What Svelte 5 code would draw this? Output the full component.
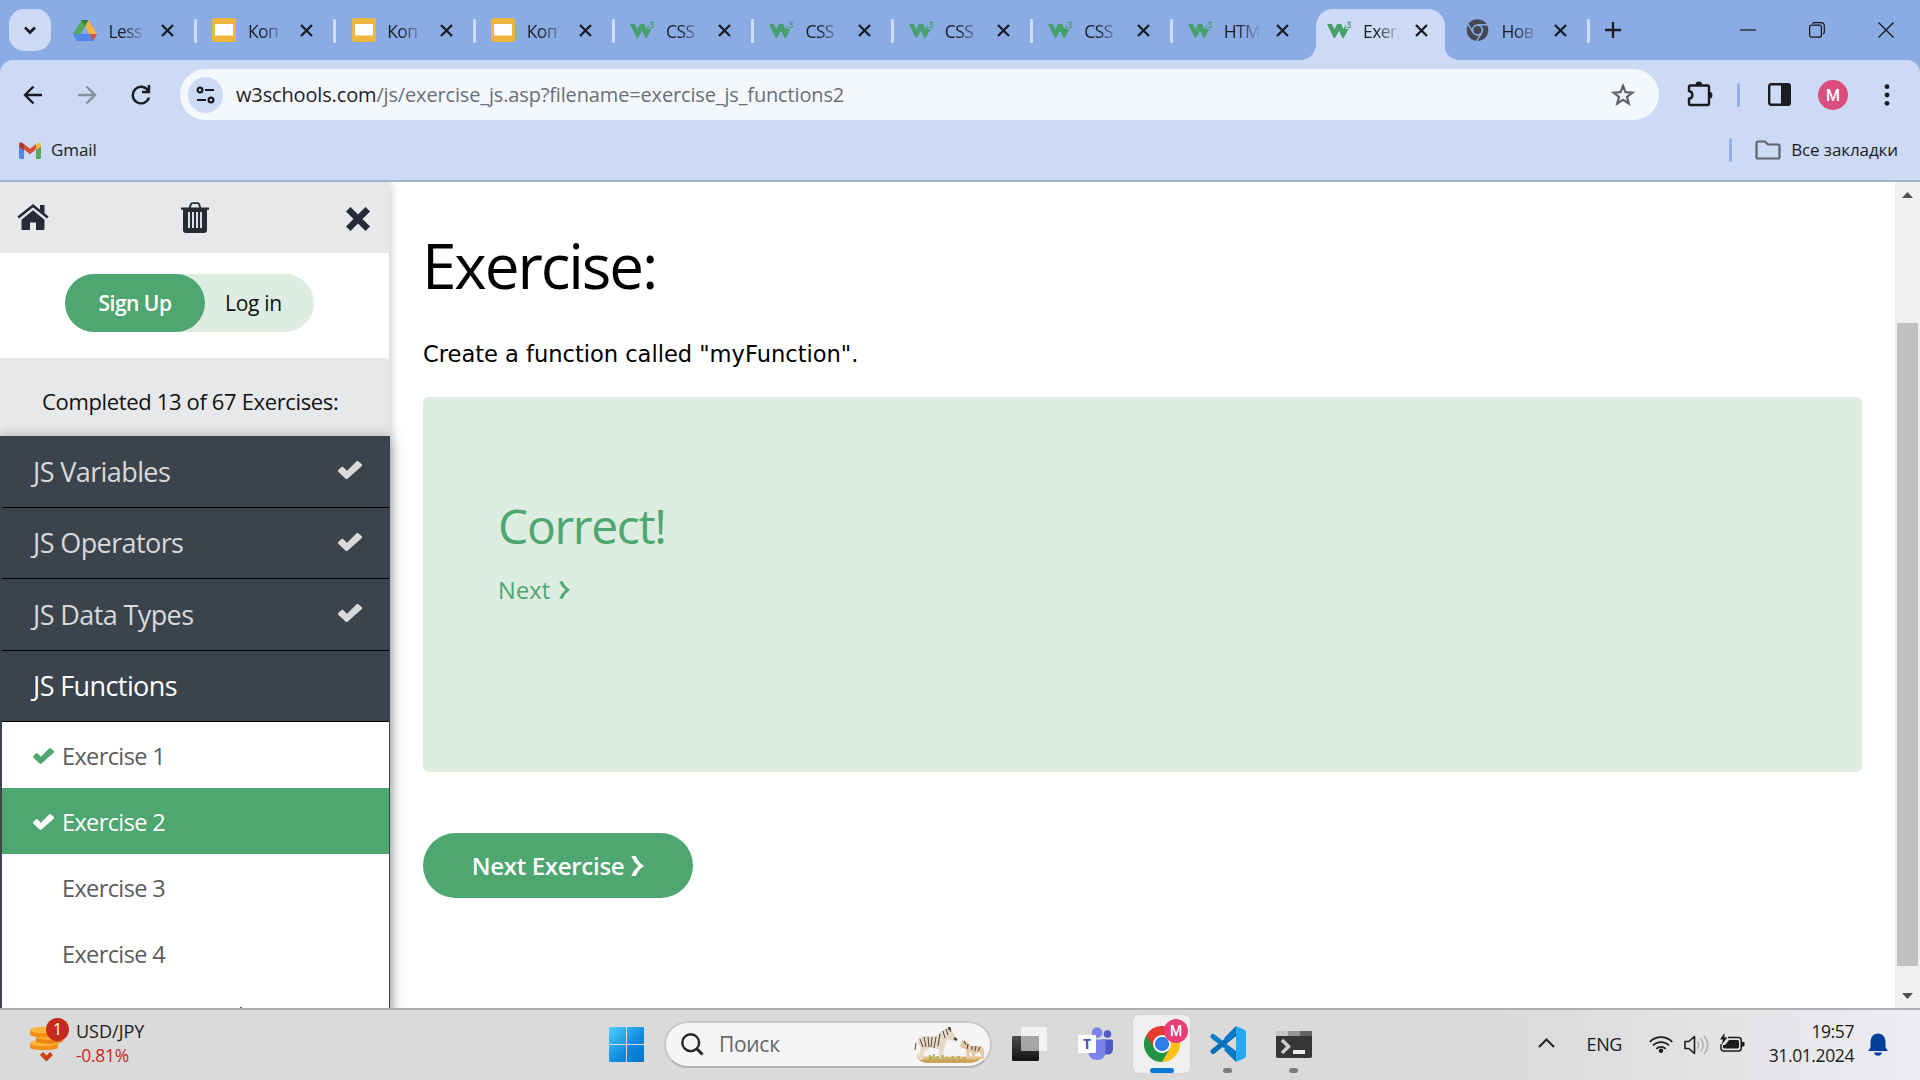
<script>
  const tabs = [
    { icon: 'drive', title: 'Less' },
    { icon: 'slides', title: 'Коп' },
    { icon: 'slides', title: 'Коп' },
    { icon: 'slides', title: 'Коп' },
    { icon: 'w3', title: 'CSS' },
    { icon: 'w3', title: 'CSS' },
    { icon: 'w3', title: 'CSS' },
    { icon: 'w3', title: 'CSS' },
    { icon: 'w3', title: 'HTM' },
    { icon: 'w3', title: 'Exer', active: true },
    { icon: 'chrome', title: 'Нов' }
  ];
  const topics = [
    { name: 'JS Variables', done: true },
    { name: 'JS Operators', done: true },
    { name: 'JS Data Types', done: true },
    { name: 'JS Functions', done: false }
  ];
  const exercises = [
    { name: 'Exercise 1', done: true },
    { name: 'Exercise 2', done: true, current: true },
    { name: 'Exercise 3' },
    { name: 'Exercise 4' }
  ];
</script>

{#snippet check()}
  <svg class="check" viewBox="0 0 24 18"><path d="M20.6.4a1.6 1.6 0 0 0-2.2 0L9 9.8 5.4 6.200a1.600 1.600 0 0 0-2.200 0L.5 8.700a1.600 1.600 0 0 0 0 2.200l7 6.700a1.600 1.600 0 0 0 2.300 0L23.600 5.200a1.600 1.600 0 0 0 0-2.200z" fill="currentColor" /></svg>
{/snippet}

<div class="screen">
  <header class="tabstrip">
    <button class="tab-search" aria-label="Search tabs">
      <svg width="14" height="9" viewBox="0 0 14 9"><path d="M2 1.500l5 5 5-5" fill="none" stroke="#1a1c22" stroke-width="2.700" /></svg>
    </button>
    <div class="tabs">
      {#each tabs as tab}
        <div class="tab" class:active={tab.active}>
          <span class="favicon">
            {#if tab.icon === 'drive'}
              <svg width="24" height="21" viewBox="0 0 24 21">
                <path d="M8.500 0h7L4 21 0 14z" fill="#58a55c" />
                <path d="M8.500 0h7L12 6.500z" fill="#2e7d46" />
                <path d="M15.500 0L24 14h-7.500L12 6.500z" fill="#f1b43f" />
                <path d="M0 14h24l-4 7H4z" fill="#5186ec" />
                <path d="M16.500 14H24l-4 7z" fill="#d95140" />
              </svg>
            {:else if tab.icon === 'slides'}
              <svg width="24" height="24" viewBox="0 0 24 24"><rect width="24" height="24" rx="3" fill="#eab63e" /><rect x="3" y="6" width="18" height="11.500" fill="#fff" /></svg>
            {:else if tab.icon === 'w3'}
              <svg width="25" height="18" viewBox="0 0 25 18">
                <path d="M0 3h4.800l2.700 5.500L10 3h4.300l2.200 5.500L18.500 3v5h3L16.800 17h-1.300L12 9.800 8 17H6.800z" fill="#46a06c" />
                <path d="M20 1.200h3.400l-1.700 2.200c2.400.2 2.200 3.400.2 3.400-1 0-1.600-.3-2-.9" fill="none" stroke="#46a06c" stroke-width="1.100" />
              </svg>
            {:else}
              <svg width="23" height="22" viewBox="0 0 23 22">
                <circle cx="11.500" cy="11" r="10.800" fill="#43474f" />
                <circle cx="11.500" cy="11" r="4.900" fill="#43474f" stroke="#8babe5" stroke-width="1.700" />
                <path d="M11.500 5.800h10M7.200 13.500L2.200 5.500M15.800 13.500l-5 8.200" stroke="#8babe5" stroke-width="1.500" />
              </svg>
            {/if}
          </span>
          <span class="title">{tab.title}</span>
          <svg class="close" width="13" height="13" viewBox="0 0 13 13"><path d="M1 1l11 11M12 1L1 12" stroke="#1a1c22" stroke-width="2.300" /></svg>
        </div>
      {/each}
    </div>
    <svg class="plus" width="16" height="16" viewBox="0 0 16 16"><path d="M8 0v16M0 8h16" stroke="#1a1c22" stroke-width="2.300" /></svg>
    <div class="window-buttons">
      <svg width="16" height="16" viewBox="0 0 16 16"><path d="M0 8h16" stroke="#111" stroke-width="1.200" /></svg>
      <svg width="16" height="16" viewBox="0 0 16 16"><rect x=".6" y="3.200" width="11.800" height="12" rx="2" fill="none" stroke="#111" stroke-width="1.200" /><path d="M3.500 1.500q.8-.9 2-.9h6.500q3.300 0 3.300 3.300v6q0 1.500-1.200 2.200" fill="none" stroke="#111" stroke-width="1.200" /></svg>
      <svg width="16" height="16" viewBox="0 0 16 16"><path d="M.5.500l15 15M15.500.500l-15 15" stroke="#111" stroke-width="1.200" /></svg>
    </div>
  </header>

  <div class="chrome">
    <nav class="toolbar">
      <svg class="back" width="20" height="20" viewBox="0 0 20 20"><path d="M19 10H2.500M10.500 1.500L2 10l8.500 8.500" fill="none" stroke="#1a1c22" stroke-width="2.400" /></svg>
      <svg class="forward" width="20" height="20" viewBox="0 0 20 20"><path d="M1 10h16.500M9.500 1.500L18 10l-8.500 8.500" fill="none" stroke="#868e9f" stroke-width="2.400" /></svg>
      <svg class="reload" width="20" height="20" viewBox="0 0 20 20"><path d="M17 5.500A8.300 8.300 0 1 0 18 12.500" fill="none" stroke="#1a1c22" stroke-width="2.400" /><path d="M19.200 0v8.200H11V5.800h5.800V0z" fill="#1a1c22" /></svg>
      <div class="omnibox">
        <span class="site-info">
          <svg width="19" height="18" viewBox="0 0 19 18"><g fill="none" stroke="#1a1c22" stroke-width="2.200"><circle cx="4" cy="4" r="2.400" /><path d="M9 4h9M1 14h9" /><circle cx="15" cy="14" r="2.400" /></g></svg>
        </span>
        <span class="url"><b>w3schools.com</b>/js/exercise_js.asp?filename=exercise_js_functions2</span>
        <svg class="star" width="24" height="24" viewBox="0 0 24 24"><path d="M12 3l2.500 6.200 6.700.5-5.200 4.200 1.700 6.600-5.700-3.600-5.700 3.600L8 13.900 2.800 9.700l6.700-.5z" fill="none" stroke="#5f646d" stroke-width="2.300" /></svg>
      </div>
      <svg class="extensions" width="26" height="26" viewBox="0 0 26 26"><path d="M3.500 4.500h17q1.500 0 1.500 1.500v16.500q0 1.500-1.500 1.500h-17q-1.500 0-1.500-1.500V17.800c4.500-.8 4.500-7 0-7.800V6q0-1.500 1.500-1.500z" fill="none" stroke="#1a1c22" stroke-width="2.400" /><path d="M8.600 4a3.300 3.400 0 0 1 6.600 0zM22 10.800a3.400 3.400 0 0 1 0 6.800z" fill="#1a1c22" /></svg>
      <i class="rule"></i>
      <svg class="side-panel" width="23" height="23" viewBox="0 0 23 23"><rect x="1.200" y="1.200" width="20.600" height="20.600" rx="2" fill="none" stroke="#1a1c22" stroke-width="2.400" /><path d="M13 1h9v21h-9z" fill="#1a1c22" /></svg>
      <span class="avatar">M</span>
      <svg class="kebab" width="6" height="22" viewBox="0 0 6 22"><g fill="#1a1c22"><circle cx="3" cy="2.700" r="2.400" /><circle cx="3" cy="11" r="2.400" /><circle cx="3" cy="19.300" r="2.400" /></g></svg>
    </nav>
    <div class="bookmarks">
      <svg class="gmail" width="22" height="17" viewBox="0 0 22 17"><path d="M0 3l5 3.500V17H1.500Q0 17 0 15.500z" fill="#5186ec" /><path d="M22 3l-5 3.500V17h3.500q1.500 0 1.500-1.500z" fill="#58a55c" /><path d="M5 2l6 4.700L17 2v5.500l-6 4.800-6-4.800z" fill="#d95140" /><path d="M17 2q5-4 5 1v1.500l-5 3.700z" fill="#f1bd42" /><path d="M5 2Q0-2 0 3v1.500l5 3.700z" fill="#b3362b" /></svg>
      <span>Gmail</span>
      <i class="rule"></i>
      <svg class="folder" width="26" height="20" viewBox="0 0 26 20"><path d="M3 1.500h7l3 3h10q1.500 0 1.500 1.500v11q0 1.500-1.500 1.500H3Q1.500 18.500 1.500 17V3Q1.500 1.500 3 1.500z" fill="none" stroke="#5f646d" stroke-width="2.200" /></svg>
      <span class="all">Все закладки</span>
    </div>
  </div>

  <div class="page">
    <aside class="sidebar">
      <div class="side-tools">
        <svg width="32" height="27" viewBox="0 0 32 27"><path d="M16 6.200L4.500 15.800V25q0 1 1 1H13v-7.500h6V26h7.500q1 0 1-1v-9.200z" fill="#272b37" /><path d="M1.200 13.500L16 1.700l14.800 11.800" fill="none" stroke="#272b37" stroke-width="2.600" /><path d="M23 1h4.500v9.500L23 7z" fill="#272b37" /></svg>
        <svg width="28" height="31" viewBox="0 0 28 31"><path d="M8.500 6.500L10 2q.3-.9 1.300-.9h5.400q1 0 1.300.9l1.500 4.500" fill="none" stroke="#272b37" stroke-width="1.900" /><path d="M0 5.500h28v2.200h-2V28q0 3-3 3H5q-3 0-3-3V7.700H0z" fill="#272b37" /><path d="M8 10v16M12 10v16M16 10v16M20 10v16" stroke="#e7e8ea" stroke-width="1.900" /></svg>
        <svg width="24" height="24" viewBox="0 0 24 24"><path d="M4.500 4.500l15 15M19.500 4.500l-15 15" stroke="#272b37" stroke-width="6.400" stroke-linecap="square" /></svg>
      </div>
      <div class="account">
        <div class="pill"><button class="signup">Sign Up</button><span class="login">Log in</span></div>
      </div>
      <div class="progress">Completed 13 of 67 Exercises:</div>
      <div class="topics">
        {#each topics as topic}
          <div class="topic" class:open={!topic.done}>
            <span>{topic.name}</span>
            {#if topic.done}{@render check()}{/if}
          </div>
        {/each}
        <ul>
          {#each exercises as ex}
            <li class:current={ex.current}>
              <span class="mark">{#if ex.done}{@render check()}{/if}</span>{ex.name}
            </li>
          {/each}
        </ul>
        <span class="speck"></span>
      </div>
    </aside>

    <main>
      <h1>Exercise:</h1>
      <p class="task">Create a function called "myFunction".</p>
      <section class="result">
        <h2>Correct!</h2>
        <div class="next">Next <svg width="11" height="18" viewBox="0 0 11 18"><path d="M.3.300H3.700Q5.500 5 11 9 5.500 13 3.700 17.700H.3Q2.500 12 6.800 9 2.500 6 .3.300z" fill="currentColor" /></svg></div>
      </section>
      <button class="next-button">Next Exercise <svg width="13" height="20" viewBox="0 0 13 20"><path d="M.3 0h4.500Q7 6 13 10 7 14 4.800 20H.3Q2.500 14 7.400 10 2.500 6 .3 0z" fill="currentColor" /></svg></button>
    </main>

    <div class="scrollbar">
      <svg width="11" height="6" viewBox="0 0 11 6"><path d="M0 6L5.500 0 11 6z" fill="#505050" /></svg>
      <div class="thumb"></div>
      <svg width="11" height="6" viewBox="0 0 11 6"><path d="M0 0l5.500 6L11 0z" fill="#505050" /></svg>
    </div>
  </div>

  <footer class="taskbar">
    <div class="widget">
      <span class="coins">
        <svg width="34" height="36" viewBox="0 0 34 36">
          <path d="M0 17v4.500c0 3.500 28 3.500 28 0V17z" fill="#f28f16" /><ellipse cx="14" cy="17" rx="14" ry="3.200" fill="#ffb53a" />
          <path d="M6 11v4c0 3.500 27 3.500 27 0v-4z" fill="#e88511" /><ellipse cx="19.500" cy="11" rx="13.500" ry="3" fill="#ffa92c" />
          <path d="M0 4v4.500c0 3.500 27 3.500 27 0V4z" fill="#f28f16" /><ellipse cx="13.500" cy="4" rx="13.500" ry="3.200" fill="#ffb53a" />
          <path d="M11.500 27.500l5 5 5-5" fill="none" stroke="#c8431a" stroke-width="4.300" />
        </svg>
        <b>1</b>
      </span>
      <span class="quote"><span>USD/JPY</span><span class="down">-0.81%</span></span>
    </div>

    <svg class="start" width="35" height="35" viewBox="0 0 35 35">
      <defs><linearGradient id="win" x1="0" y1="0" x2="35" y2="35" gradientUnits="userSpaceOnUse"><stop offset="0" stop-color="#4dcfff" /><stop offset=".6" stop-color="#0f88dc" /><stop offset="1" stop-color="#0072d0" /></linearGradient></defs>
      <g fill="url(#win)"><rect width="17" height="17" rx="1" /><rect x="18" width="17" height="17" rx="1" /><rect y="18" width="17" height="17" rx="1" /><rect x="18" y="18" width="17" height="17" rx="1" /></g>
    </svg>

    <div class="search">
      <svg width="23" height="23" viewBox="0 0 23 23"><circle cx="9.700" cy="9.700" r="8.400" fill="none" stroke="#262626" stroke-width="2.400" /><path d="M15.500 15.500l6 6" stroke="#262626" stroke-width="3" /></svg>
      <span>Поиск</span>
      <svg class="zebras" width="70" height="37" viewBox="0 0 70 37">
        <path d="M3 30h65q-4 6-13 6H15Q6 36 3 30z" fill="#d1a25e" />
        <path d="M5 31h61" stroke="#e5c27c" stroke-width="3" />
        <path d="M3 15q1-6 8-6h11l8-7 6-2 2 3 5 9-2 3-6-3-3 3-2 7-2 10h-3v-10l-9-1-6 3-1 9h-3l-1-9-3 8H5l2-12z" fill="#e6d9c6" />
        <path d="M47 17l1-4 4 1 5 5h10l3 4v9h-2l-2-7-5 2-1 5h-2v-6l-3-1v7h-2l-1-10-4-1-2-2z" fill="#e3c6a4" />
        <g fill="none" stroke="#4a423c" stroke-width="1"><path d="M6 12l3 8M10 10l2 10M14 10l1 10M18 10l-1 10M22 10l-2 11M26 7l-2 12M29 4l2 7M32 2l2 6M35 1l2 4M2 16l-1 7" /><path d="M50 14l2 4M54 17l-1 5M58 19v4M62 19l-1 5M66 20l-2 4" /><path d="M40 11l3 2M35 0l1 3" stroke-width="2.500" /></g>
        <path d="M15 34l1-6 1 5 3-6 1 7 3-5 1 5 4-6v6l4-4 1 4 5-5v5l6-5 1 5 5-4v4" fill="none" stroke="#a8a34e" stroke-width="1" />
      </svg>
    </div>

    <svg class="task-view" width="35" height="34" viewBox="0 0 35 34">
      <defs><linearGradient id="tv" x1="0" y1="0" x2="0" y2="1"><stop offset="0" stop-color="#4d4d4d" /><stop offset="1" stop-color="#111" /></linearGradient></defs>
      <rect y="9" width="27" height="25" rx="1.500" fill="url(#tv)" /><rect x="9" width="26" height="24" rx="1" fill="#fff" opacity=".66" /><path d="M9 9h18v15H9z" fill="#9b9b9b" opacity=".7" />
    </svg>

    <svg class="teams" width="36" height="34" viewBox="0 0 36 34">
      <circle cx="29.500" cy="7" r="3.800" fill="#5059c9" /><path d="M24 12.500h9.500q1.500 0 1.500 1.500v8q0 5.500-6 5.500h-5z" fill="#5059c9" />
      <circle cx="19" cy="5.500" r="5.300" fill="#7b83eb" /><path d="M11 12.500h15q1.500 0 1.500 1.500v10q0 9-8.500 9t-8.500-9z" fill="#7b83eb" />
      <rect y="8" width="18" height="18" rx="1" fill="#fff" /><text x="9" y="22" text-anchor="middle" font-family="Open Sans, sans-serif" font-weight="700" font-size="14" fill="#4b53bc">T</text>
    </svg>

    <div class="app running">
      <svg width="36" height="36" viewBox="0 0 36 36">
        <path d="M18 9h15.600A18 18 0 0 1 18 36l7.800-13.500z" fill="#fcc016" />
        <path d="M2.400 9A18 18 0 0 0 18 36l7.800-13.500L18 18z" fill="#259344" />
        <path d="M2.400 9A18 18 0 0 1 33.600 9H18l-7.800 13.500z" fill="#e33b2e" />
        <circle cx="18" cy="18" r="9" fill="#fff" /><circle cx="18" cy="18" r="7.200" fill="#2f7bea" />
      </svg>
      <b>M</b>
      <i></i>
    </div>

    <div class="app vscode">
      <svg width="36" height="36" viewBox="0 0 36 36">
        <path d="M3 10.500L27 29" stroke="#0f7fc8" stroke-width="5" stroke-linecap="round" /><path d="M3 25.500L27 6" stroke="#0a6db8" stroke-width="5" stroke-linecap="round" />
        <path d="M26 0v10l-8 6-4-4zM26 36V26l-8-6-4 4z" fill="#0c78c2" /><path d="M26 0l8.500 3.700q1.500.8 1.500 2.300v24q0 1.500-1.500 2.300L26 36z" fill="#27a9f1" />
      </svg>
      <i></i>
    </div>

    <div class="app terminal">
      <svg width="36" height="27" viewBox="0 0 36 27">
        <rect width="36" height="27" rx="1.800" fill="#363636" /><path d="M1.500 0H12v5H0V1.500Q0 0 1.500 0z" fill="#c6c6c6" /><path d="M12 0h12v5H12z" fill="#979797" /><path d="M24 0h10.500Q36 0 36 1.500V5H24z" fill="#626262" />
        <path d="M6 9l6.500 6.500L6 22" fill="none" stroke="#ccc" stroke-width="3.500" /><rect x="17" y="19" width="12" height="4" fill="#ededed" />
      </svg>
      <i></i>
    </div>

    <div class="tray">
      <svg class="up" width="17" height="10" viewBox="0 0 17 10"><path d="M1 9l7.500-7.500L16 9" fill="none" stroke="#222" stroke-width="2" /></svg>
      <span class="lang">ENG</span>
      <svg class="wifi" width="24" height="18" viewBox="0 0 24 18"><g fill="none" stroke="#1b1b1b" stroke-width="1.700"><path d="M.8 7a15.500 15.500 0 0 1 22.400 0M4 10.500a11 11 0 0 1 16 0M7.300 13.800a6.600 6.600 0 0 1 9.400 0" /></g><circle cx="12" cy="15.700" r="2.200" fill="#1b1b1b" /></svg>
      <svg class="sound" width="25" height="20" viewBox="0 0 25 20"><path d="M1 6.500h3.800L10.500 1.500v17L4.800 13.500H1z" fill="none" stroke="#1b1b1b" stroke-width="1.600" stroke-linejoin="round" /><g fill="none" stroke="#b2b2b4" stroke-width="1.600"><path d="M13.500 6.500q2.500 3.500 0 7M16.700 3.500q5 6.500 0 13M20 .7q7.500 9.300 0 18.600" /></g></svg>
      <svg class="battery" width="25" height="20" viewBox="0 0 25 20"><path d="M8 4.500h10.500q2.700 0 2.700 2.700v8.100q0 2.700-2.700 2.700h-15Q1 18 1 15.300v-4" fill="none" stroke="#1b1b1b" stroke-width="1.500" /><path d="M9 7h8.500q1.500 0 1.500 1.500v5.500q0 1.500-1.500 1.500h-13q-1.500 0-1.500-1.500V12h2zM21.500 8.500l3 .8v3.800l-3 .8z" fill="#1b1b1b" /><path d="M4.500 0L0 6.500h3L1.500 12 7.500 4.500H4.500z" fill="#1b1b1b" /></svg>
      <span class="clock"><span>19:57</span><span>31.01.2024</span></span>
      <svg class="bell" width="20" height="23" viewBox="0 0 20 23"><path d="M2.500 8.500a7.500 8 0 0 1 15 0v6l2.500 3.500H0L2.500 14.500zM6 19.500h8q-1 3.300-4 3.300t-4-3.300z" fill="#00409a" /></svg>
    </div>
  </footer>
</div>

<style>
  :global(body) { overflow: hidden; }
  * { box-sizing: border-box; }
  svg { display: block; flex: none; }
  button { border: 0; padding: 0; font: inherit; }
  .screen {
    width: 1920px; height: 1080px; overflow: hidden;
    display: flex; flex-direction: column;
    background: #8babe5; color: #1a1c22;
    font-family: "Open Sans", "Noto Sans", sans-serif;
  }

  /* Tab strip */
  .tabstrip { height: 60px; flex: none; display: flex; align-items: flex-start; padding-left: 9px; }
  .tab-search { width: 42px; height: 42px; margin-top: 9px; border-radius: 15px; background: #ccdaf5; display: grid; place-items: center; }
  .tabs { display: flex; margin-left: 6.500px; }
  .tab { position: relative; width: 139.400px; height: 51px; margin-top: 9px; padding: 0 23px 9px 15px; display: flex; align-items: center; }
  .tab:last-child { margin-right: -1px; left: -1px; }
  .tab::after { content: ""; position: absolute; right: 0; top: 10px; width: 3px; height: 24px; border-radius: 1px; background: #cfdcf6; }
  .tab:has(+ .active)::after { display: none; }
  .favicon { width: 25px; display: grid; place-items: center; }
  .title {
    margin: 1px 0 0 11px; width: 38px; white-space: nowrap;
    font-size: 17.500px; line-height: 26px; letter-spacing: -.6px;
    -webkit-mask-image: linear-gradient(90deg, #000 35%, transparent 98%); mask-image: linear-gradient(90deg, #000 35%, transparent 98%);
  }
  .close { margin-left: auto; }
  /* The active tab is a rounded body over two concave feet */
  .tab.active::before { content: ""; position: absolute; left: 3.500px; width: 129px; top: 0; bottom: 0; border-radius: 17px 17px 0 0; background: #ccdaf5; }
  .tab.active::after {
    left: -11px; right: -8px; top: auto; bottom: 0; width: auto; height: 15px; border-radius: 0;
    background:
      radial-gradient(circle at 0 0, transparent 14.500px, #ccdaf5 15px) left / 15px 15px no-repeat,
      radial-gradient(circle at 100% 0, transparent 14.500px, #ccdaf5 15px) right / 15px 15px no-repeat;
  }
  .tab.active > * { position: relative; }
  .plus { margin: 22px 0 0 15px; }
  .window-buttons { display: flex; gap: 53px; margin: 22px 26px 0 auto; }

  /* Toolbar and bookmarks */
  .chrome { height: 122px; flex: none; background: #ccdaf5; border-radius: 13px 13px 0 0; border-bottom: 2px solid #a3b0ca; }
  .toolbar { height: 69px; display: flex; align-items: center; padding-left: 23px; }
  .forward { margin-left: 34px; }
  .reload { margin-left: 34px; }
  .omnibox { width: 1479px; height: 51px; margin: 0 0 0 29px; padding: 0 24px 0 8px; border-radius: 26px; background: #f4f8fd; display: flex; align-items: center; }
  .site-info { width: 35px; height: 36px; border-radius: 18px; background: #ccdaf5; display: grid; place-items: center; }
  .url { margin-left: 13px; font-size: 20px; letter-spacing: -.150px; color: #6a6f77; white-space: nowrap; }
  .url b { font-weight: 400; color: #1f2228; }
  .star { margin-left: auto; }
  .extensions { margin: 0 0 2px 28px; }
  .rule { width: 3px; height: 24px; border-radius: 2px; background: #8fb0eb; }
  .toolbar .rule { margin-left: 24px; }
  .side-panel { margin-left: 28px; }
  .avatar { width: 30px; height: 30px; margin-left: 27px; border-radius: 50%; background: #da4d7c; color: #fff; font: 500 16px/31px Roboto, sans-serif; text-align: center; }
  .kebab { margin-left: 36px; }
  .bookmarks { height: 40px; margin-top: 1px; padding: 0 22px 0 19px; display: flex; align-items: center; font-size: 17px; letter-spacing: -.100px; }
  .bookmarks > span { margin: -2px 0 0 10px; }
  .bookmarks .rule { margin-left: auto; }
  .folder { margin-left: 23px; }

  /* Page */
  .page { height: 826px; flex: none; display: flex; background: #fff; overflow: hidden; }
  .sidebar { width: 390px; flex: none; background: #fff; border-right: 1px solid #dcdcdc; box-shadow: 0 2px 10px rgba(0, 0, 0, .25); }
  .side-tools { height: 71px; margin-right: -1px; padding: 0 20px 1px 17px; background: #e7e8ea; display: flex; align-items: center; justify-content: space-between; }
  .side-tools svg:nth-child(2) { margin: 0 0 0 -6px; }
  .side-tools svg:nth-child(3) { margin-top: 4px; }
  .account { height: 105px; padding: 21px 0 0 65px; }
  .pill { width: 249px; height: 58px; border-radius: 29px; background: #ddede1; display: flex; font-size: 21px; line-height: 58px; color: #111; }
  .signup { width: 140px; border-radius: 29px; background: #4ea671; color: #fff; font-weight: 600; letter-spacing: -.500px; }
  .login { margin-left: 20px; letter-spacing: -.300px; }
  .progress { height: 78px; margin-right: -1px; padding-left: 42px; background: #e7e8ea; font-size: 22px; line-height: 86px; letter-spacing: -.350px; color: #111; }
  .topics { margin-right: -1px; height: 640px; padding: 0 1px 0 2px; background: #3b444c; box-shadow: 0 2px 14px rgba(0, 0, 0, .35); }
  .topic { height: 71.500px; padding: 0 27px 0 31px; border-bottom: 1px solid #000; display: flex; align-items: center; justify-content: space-between; font-size: 27px; letter-spacing: -.600px; color: #d9d9d9; }
  .topic.open { color: #fff; }
  .topic .check { width: 24px; height: 18px; margin-top: -2px; }
  ul { margin: 0; padding: 0; list-style: none; background: #fff; }
  li { height: 66px; padding: 2px 0 0 31px; display: flex; align-items: center; font-size: 23.500px; letter-spacing: -.620px; color: #5c5c5c; }
  li.current { background: #4ea671; color: #fff; }
  .mark { width: 29px; color: #4ea671; }
  .current .mark { color: #fff; }
  .mark .check { width: 21px; height: 16px; }
  .speck { display: block; height: 40px; background: radial-gradient(circle at 239px 22px, #666 1px, transparent 1.500px) #fff; }

  main { flex: 1; padding: 41px 33px 0; }
  h1 { margin: 0 0 0 -1px; font-size: 62px; line-height: 84px; font-weight: 400; letter-spacing: -2.100px; color: #000; }
  .task { margin: 32px 0 0; font: 22.600px/30px "DejaVu Sans", sans-serif; letter-spacing: -.030px; color: #000; }
  .result { width: 1439px; height: 375px; margin-top: 28px; padding: 97px 75px; border-radius: 6px; background: #ddede1; color: #4ea671; }
  h2 { margin: 0; font-size: 48px; line-height: 64px; font-weight: 400; letter-spacing: -1.300px; }
  .next { display: flex; align-items: center; gap: 9px; margin-top: 16px; font-size: 23.500px; line-height: 32px; letter-spacing: .200px; }
  .next-button { display: flex; align-items: center; justify-content: center; gap: 7px; width: 270px; height: 65px; margin-top: 61px; border-radius: 33px; background: #4ea671; color: #fff; font-size: 24px; font-weight: 600; letter-spacing: -.300px; }

  .scrollbar { width: 25px; flex: none; padding: 10px 0 9px; background: #f0f0f0; display: flex; flex-direction: column; align-items: center; }
  .thumb { width: 21px; height: 643px; margin: 125px 0 auto; background: #c1c1c1; }

  /* Taskbar */
  .taskbar { height: 72px; flex: none; display: flex; align-items: flex-start; border-top: 2px solid #afafaf; background: linear-gradient(90deg, #dadada 0 78%, #e4e4e7 90%, #ececf2); color: #1b1b1b; }
  .widget { width: 150px; display: flex; padding: 8px 0 0 30px; }
  .coins { position: relative; width: 46px; padding-top: 8px; }
  .coins b { position: absolute; left: 16px; top: 0; width: 23px; height: 23px; border-radius: 50%; background: #c42b1c; color: #fff; font-size: 16px; line-height: 22px; font-weight: 400; text-align: center; }
  .quote { display: flex; flex-direction: column; font-size: 18px; line-height: 24px; margin-top: 1px; }
  .down { color: #c42b1c; font-size: 17.500px; letter-spacing: -.300px; }
  .start { margin: 17px 0 0 459px; }
  .search { width: 328px; height: 47px; margin: 11px 0 0 20px; padding: 0 6px 0 15px; border: 2px solid #c8c8c8; border-bottom-color: #b2b2b2; border-radius: 24px; background: #f5f5f5; display: flex; align-items: center; }
  .search span { margin: -1px 0 0 15px; font-size: 21px; letter-spacing: -.300px; color: #666; }
  .zebras { margin: 2px 0 0 auto; }
  .task-view { margin: 17px 0 0 20px; }
  .teams { margin: 17px 0 0 31px; }
  .app { position: relative; width: 57px; height: 58px; margin: 5px 0 0 19px; display: flex; justify-content: center; align-items: center; border-radius: 6px; }
  .app i { position: absolute; bottom: 0; left: 24px; width: 9px; height: 5px; border-radius: 3px; background: #7d7d7d; }
  .running { background: #efefef; box-shadow: 0 0 0 1px #d2d2d2; }
  .running b { position: absolute; right: 2px; top: 4px; width: 24px; height: 24px; border-radius: 50%; background: #e83e78; color: #fff; font: 500 14px/24px Roboto, sans-serif; text-align: center; }
  .running i { left: 17px; width: 24px; background: #0a78d4; }
  .running svg { margin: 0 0 1px 0; }
  .vscode { margin-left: 9px; }
  .terminal { margin-left: 9px; }
  .tray { margin-left: auto; padding-right: 32px; display: flex; align-items: center; height: 68px; }
  .up { margin-bottom: 2px; }
  .lang { margin-left: 32px; font-size: 18px; letter-spacing: -.400px; }
  .wifi { margin: -1px 0 0 27px; }
  .sound { margin: 1px 0 0 11px; }
  .battery { margin: -2px 0 0 11px; }
  .clock { width: 86px; margin: -2px 0 0 23px; display: flex; flex-direction: column; text-align: right; font-size: 17.500px; line-height: 24px; letter-spacing: -.400px; }
  .bell { margin: 1px 0 0 14px; }
</style>
